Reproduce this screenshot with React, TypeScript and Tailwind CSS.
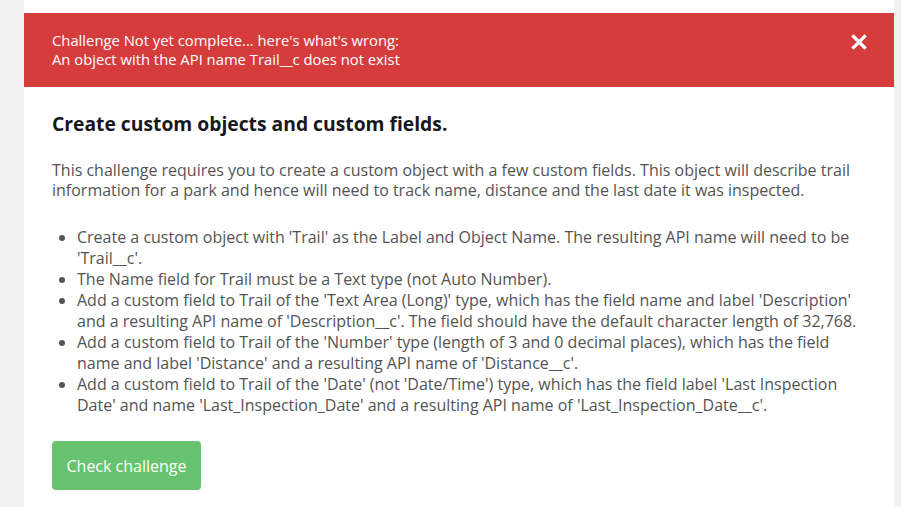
export default function App() {
  const items = [
    <>Create a custom object with 'Trail' as the Label and Object Name. The resulting API name will need to be<br />'Trail__c'.</>,
    <>The Name field for Trail must be a Text type (not Auto Number).</>,
    <>Add a custom field to Trail of the 'Text Area (Long)' type, which has the field name and label 'Description'<br />and a resulting API name of 'Description__c'. The field should have the default character length of 32,768.</>,
    <>Add a custom field to Trail of the 'Number' type (length of 3 and 0 decimal places), which has the field<br />name and label 'Distance' and a resulting API name of 'Distance__c'.</>,
    <>Add a custom field to Trail of the 'Date' (not 'Date/Time') type, which has the field label 'Last Inspection<br />Date' and name 'Last_Inspection_Date' and a resulting API name of 'Last_Inspection_Date__c'.</>,
  ];

  return (
    <div className="w-[901px] h-[507px] overflow-hidden bg-[#f2f2f2] pl-[24px] pr-[7px] font-['Open_Sans',sans-serif]">
      <div className="h-full bg-white pt-[13px]">
        {/* error banner */}
        <div className="flex h-[74px] items-start justify-between bg-[#d63c3c] pl-[28px] pr-[27px] pt-[18px] text-white">
          <div className="text-[14.8px] leading-[19px]">
            <p>Challenge Not yet complete... here's what's wrong:</p>
            <p>An object with the API name Trail__c does not exist</p>
          </div>
          <button className="mt-[3px] text-white">
            <svg width="16" height="16" viewBox="0 0 16 16">
              <path d="M2.5 2.5 L13.5 13.5 M13.5 2.5 L2.5 13.5" stroke="currentColor" strokeWidth="3.2" strokeLinecap="square" />
            </svg>
          </button>
        </div>

        <div className="px-[28px] pt-[25px]">
          <h2 className="text-[19.3px] font-bold leading-[24px] text-[#16181d]">Create custom objects and custom fields.</h2>

          <p className="mt-[24px] text-[16px] leading-[20px] text-[#545454]">
            This challenge requires you to create a custom object with a few custom fields. This object will describe trail<br />
            information for a park and hence will need to track name, distance and the last date it was inspected.
          </p>

          <ul className="mt-[27px] list-disc pl-[25px] text-[16px] leading-[21px] text-[#545454] marker:text-[#545454]">
            {items.map((it, i) => (
              <li key={i} className="whitespace-nowrap">{it}</li>
            ))}
          </ul>

          <button className="mt-[25px] h-[49px] w-[149px] rounded-[4px] bg-[#67c36f] text-[16px] text-white">
            Check challenge
          </button>
        </div>
      </div>
    </div>
  );
}
